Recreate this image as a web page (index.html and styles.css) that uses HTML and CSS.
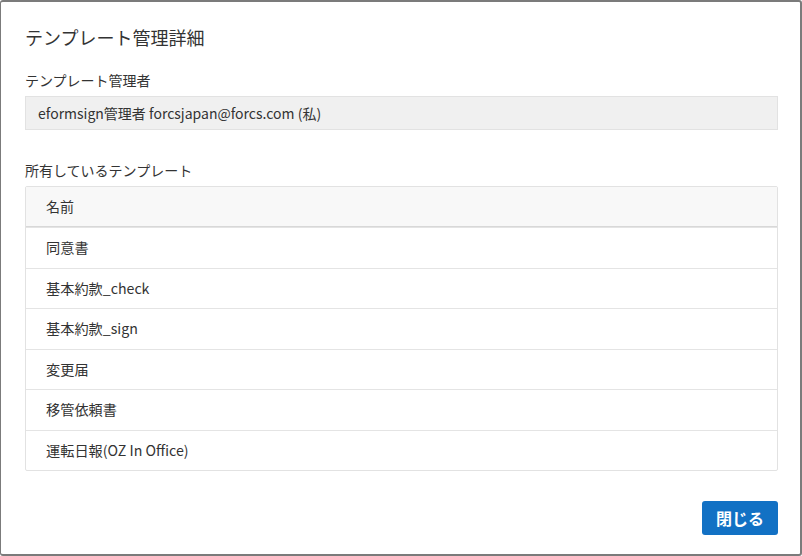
FILE: index.html
```html
<!DOCTYPE html>
<html lang="ja">
<head>
<meta charset="utf-8">
<link rel="stylesheet" href="styles.css">
</head>
<body>
<div class="dialog">
  <h1 class="title">テンプレート管理詳細</h1>
  <div class="label">テンプレート管理者</div>
  <div class="field">eformsign管理者 forcsjapan@forcs.com (私)</div>
  <div class="label label-2">所有しているテンプレート</div>
  <div class="table">
    <div class="thead">名前</div>
    <div class="row">同意書</div>
    <div class="row">基本約款_check</div>
    <div class="row">基本約款_sign</div>
    <div class="row">変更届</div>
    <div class="row">移管依頼書</div>
    <div class="row">運転日報(OZ In Office)</div>
  </div>
  <div class="footer">
    <button class="btn">閉じる</button>
  </div>
</div>
</body>
</html>
```
FILE: styles.css
```css
html, body {
  margin: 0;
  padding: 0;
  background: #ffffff;
}
body {
  font-family: "Noto Sans CJK JP", "Noto Sans", sans-serif;
  color: #333333;
}
.dialog {
  box-sizing: border-box;
  width: 802px;
  height: 556px;
  border-style: solid;
  border-color: #7b7b7b;
  border-width: 2px 2px 2px 1px;
  border-radius: 3px;
  padding: 22px 22px 0 24px;
  display: flex;
  flex-direction: column;
}
.title {
  margin: 0;
  font-size: 18px;
  font-weight: 400;
  line-height: 26px;
  color: #333;
}
.label {
  margin-top: 20px;
  font-size: 14px;
  line-height: 20px;
  color: #333;
}
.label-2 {
  margin-top: 30px;
}
.field {
  margin-top: 6px;
  height: 34px;
  box-sizing: border-box;
  border: 1px solid #e2e2e2;
  background: #f0f0f0;
  font-size: 14px;
  line-height: 32px;
  padding-left: 12px;
  color: #333;
}
.table {
  margin-top: 6px;
  border: 1px solid #e2e2e2;
  border-radius: 2px;
}
.thead {
  height: 39px;
  line-height: 39px;
  background: #f8f8f8;
  border-bottom: 1px solid #d8d8d8;
  font-size: 14px;
  padding-left: 20px;
  color: #333;
}
.row {
  height: 39.5px;
  line-height: 39.5px;
  border-top: 1px solid #e4e4e4;
  font-size: 14.2px;
  padding-left: 20px;
  color: #333;
}
.footer {
  margin-top: 30px;
  display: flex;
  justify-content: flex-end;
}
.btn {
  width: 76px;
  height: 34px;
  border: none;
  border-radius: 3px;
  background: #1271c4;
  color: #ffffff;
  font-family: "Noto Sans CJK JP", "Noto Sans", sans-serif;
  font-size: 16px;
  font-weight: 700;
  padding: 0;
  cursor: pointer;
}
```
